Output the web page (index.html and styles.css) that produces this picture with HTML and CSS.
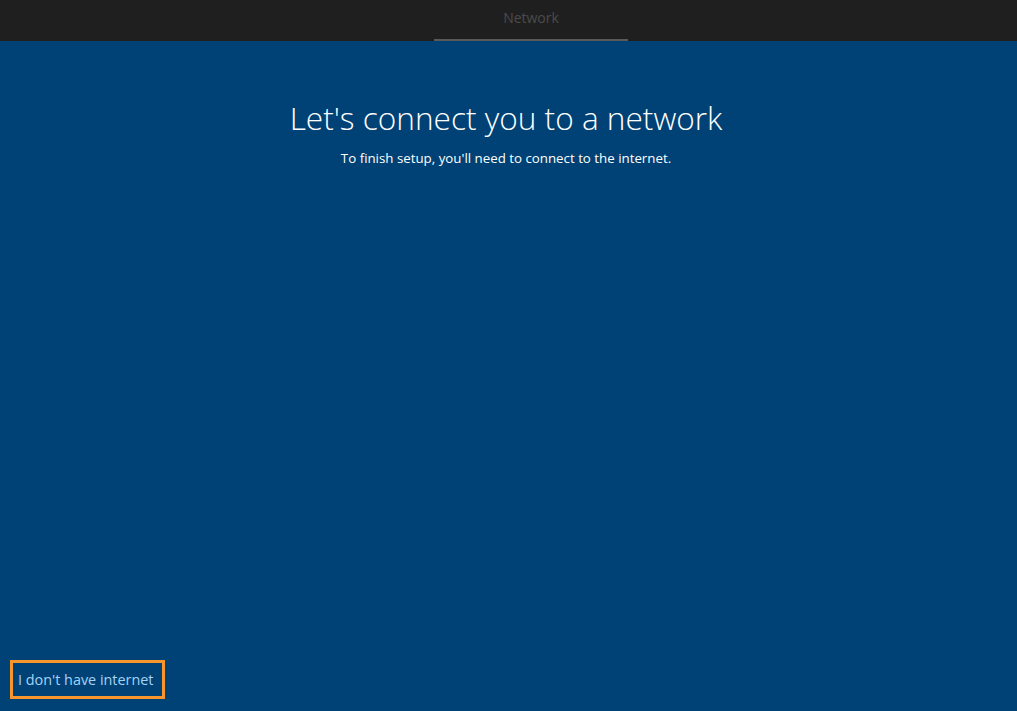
FILE: index.html
```html
<!DOCTYPE html>
<html>
<head>
<meta charset="utf-8">
<link rel="stylesheet" href="styles.css">
</head>
<body>
<div class="page">
  <header class="topbar">
    <div class="tab">Network</div>
  </header>
  <main class="content">
    <h1 class="title">Let's connect you to a network</h1>
    <p class="subtitle">To finish setup, you'll need to connect to the internet.</p>
  </main>
  <footer class="footer">
    <a class="skip" href="#">I don't have internet</a>
  </footer>
</div>
</body>
</html>
```

FILE: styles.css
```css
html, body {
  margin: 0;
  padding: 0;
  height: 100%;
}
body {
  font-family: "Open Sans", "Noto Sans", sans-serif;
  background: #004275;
}
.page {
  display: flex;
  flex-direction: column;
  height: 711px;
}
.topbar {
  height: 41px;
  background: #1f1f1f;
  display: flex;
  justify-content: center;
  padding-left: 45px;
  box-sizing: border-box;
}
.tab {
  width: 194px;
  height: 41px;
  box-sizing: border-box;
  border-bottom: 2px solid #5a5a5a;
  color: #4b4b4b;
  font-size: 14px;
  text-align: center;
  line-height: 35px;
}
.content {
  flex: 1;
  display: flex;
  flex-direction: column;
  align-items: center;
  padding-top: 54px;
  padding-right: 5px;
}
.title {
  margin: 0;
  font-weight: 300;
  font-size: 31.6px;
  line-height: 46px;
  color: #ffffff;
}
.subtitle {
  margin: 8px 0 0;
  font-size: 13.3px;
  color: #ffffff;
}
.footer {
  padding: 0 0 12px 10px;
  display: flex;
}
.skip {
  display: block;
  width: 155px;
  height: 39px;
  box-sizing: border-box;
  border: 3px solid #f7962c;
  color: #a6d2f5;
  text-decoration: none;
  font-size: 14.4px;
  line-height: 33px;
  padding-left: 5px;
}
```
